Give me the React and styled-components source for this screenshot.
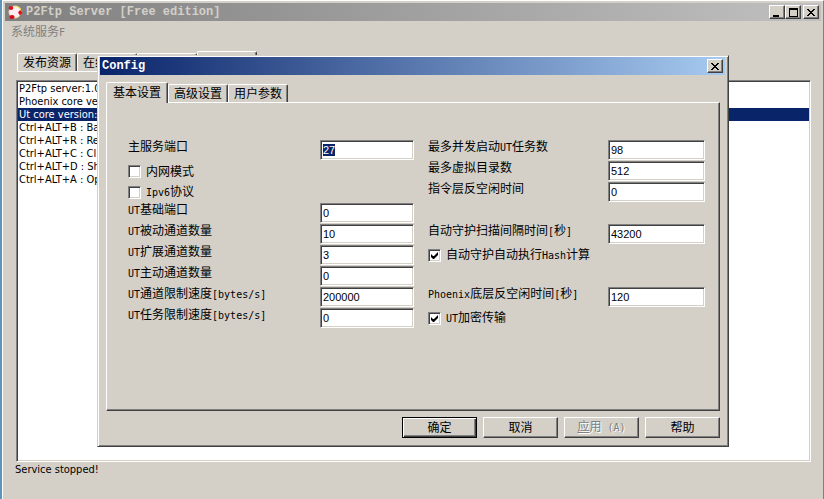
import React, { useEffect, useRef } from "react";
import styled, { createGlobalStyle, css } from "styled-components";

const logLines = [
  "P2Ftp server:1.0",
  "Phoenix core ve",
  "Ut core version:",
  "Ctrl+ALT+B : Ba",
  "Ctrl+ALT+R : Re",
  "Ctrl+ALT+C : Cl",
  "Ctrl+ALT+D : Sh",
  "Ctrl+ALT+A : Op",
];

const leftFields = [
  { id: "port", label: "主服务端口", value: "27", focus: true },
  { id: "lan", label: "内网模式", type: "check" },
  { id: "ipv6", label: "Ipv6协议", type: "check" },
  { id: "utport", label: "UT基础端口", value: "0" },
  { id: "passive", label: "UT被动通道数量", value: "10" },
  { id: "extend", label: "UT扩展通道数量", value: "3" },
  { id: "active", label: "UT主动通道数量", value: "0" },
  { id: "chspeed", label: "UT通道限制速度[bytes/s]", value: "200000" },
  { id: "taskspeed", label: "UT任务限制速度[bytes/s]", value: "0" },
];

const rightFields = [
  { id: "maxtask", label: "最多并发启动UT任务数", value: "98" },
  { id: "maxdir", label: "最多虚拟目录数", value: "512" },
  { id: "idle", label: "指令层反空闲时间", value: "0" },
  { id: "gap1", type: "gap" },
  { id: "scan", label: "自动守护扫描间隔时间[秒]", value: "43200" },
  { id: "hash", label: "自动守护自动执行Hash计算", type: "check", checked: true },
  { id: "gap2", type: "gap" },
  { id: "phoenix", label: "Phoenix底层反空闲时间[秒]", value: "120" },
  { id: "encrypt", label: "UT加密传输", type: "check", checked: true },
];

// latin runs use a half-width face next to the full-width characters
const Mixed = ({ text }) =>
  text
    .split(/([\x20-\x7e]+)/)
    .filter(Boolean)
    .map((part, i) =>
      /^[\x20-\x7e]/.test(part) ? <Latin key={i}>{part}</Latin> : part
    );

const Logo = () => (
  <svg width="15" height="15" viewBox="0 0 15 15" aria-hidden="true">
    <circle cx="7" cy="7" r="6" fill="#fdeef4" stroke="#e8dc9a" strokeWidth="1" />
    <ellipse cx="3" cy="3" rx="2.3" ry="2" fill="#e01018" />
    <ellipse cx="4" cy="12" rx="2.6" ry="1.9" fill="#d80c14" />
    <path d="M10 7.5 L12 5 L14.5 7.5 L12 10.5 Z" fill="#e01018" />
    <path d="M8 1 L12 3 L12.5 5" fill="none" stroke="#f6e64c" strokeWidth="1" />
  </svg>
);

const CloseIcon = () => (
  <svg width="8" height="7" viewBox="0 0 8 7" shapeRendering="crispEdges" aria-hidden="true">
    <path
      d="M0 0h2v1H0zM6 0h2v1H6zM1 1h2v1H1zM5 1h2v1H5zM2 2h4v1H2zM3 3h2v1H3zM2 4h4v1H2zM1 5h2v1H1zM5 5h2v1H5zM0 6h2v1H0zM6 6h2v1H6z"
      fill="#000"
    />
  </svg>
);

const MinIcon = () => (
  <svg width="10" height="9" viewBox="0 0 10 9" shapeRendering="crispEdges" aria-hidden="true">
    <path d="M1 7h6v2H1z" fill="#000" />
  </svg>
);

const MaxIcon = () => (
  <svg width="9" height="9" viewBox="0 0 9 9" shapeRendering="crispEdges" aria-hidden="true">
    <path d="M0 0h9v9H0zM1 2v6h7V2z" fillRule="evenodd" fill="#000" />
  </svg>
);

const Field = ({ field }) => {
  const ref = useRef(null);

  useEffect(() => {
    if (field.focus) {
      ref.current.focus();
      ref.current.select();
    }
  }, [field.focus]);

  if (field.type === "gap") return <Row />;

  if (field.type === "check") {
    return (
      <CheckRow>
        <CheckBox type="checkbox" id={field.id} defaultChecked={field.checked} />
        <label htmlFor={field.id}>
          <Mixed text={field.label} />
        </label>
      </CheckRow>
    );
  }

  return (
    <Row>
      <FieldLabel htmlFor={field.id}>
        <Mixed text={field.label} />
      </FieldLabel>
      <TextBox ref={ref} id={field.id} type="text" defaultValue={field.value} />
    </Row>
  );
};

const App = () => {
  return (
    <>
      <GlobalStyle />
      <Desktop>
        <MainWindow>
          <TitleBar>
            <Logo />
            <Title>P2Ftp Server [Free edition]</Title>
            <ControlButton aria-label="最小化"><MinIcon /></ControlButton>
            <ControlButton aria-label="最大化"><MaxIcon /></ControlButton>
            <ControlButton $apart aria-label="关闭"><CloseIcon /></ControlButton>
          </TitleBar>
          <MenuBar>
            <MenuButton disabled><Mixed text="系统服务F" /></MenuButton>
          </MenuBar>
          <MainTabs>
            <Tab>发布资源</Tab>
            <Tab>在线</Tab>
            <Tab />
            <Tab $active />
          </MainTabs>
          <MainPage>
            <LogList>
              {logLines.map((line, i) => (
                <LogLine key={line} $selected={i === 2}>{line}</LogLine>
              ))}
            </LogList>
          </MainPage>
          <StatusBar>Service stopped!</StatusBar>
        </MainWindow>

        <Dialog role="dialog" aria-label="Config">
          <TitleBar $active>
            <Title>Config</Title>
            <ControlButton aria-label="关闭"><CloseIcon /></ControlButton>
          </TitleBar>
          <DialogBody>
            <DialogTabs>
              <Tab $active>基本设置</Tab>
              <Tab>高级设置</Tab>
              <Tab>用户参数</Tab>
            </DialogTabs>
            <TabPage>
              <Column>
                {leftFields.map((f) => <Field key={f.id} field={f} />)}
              </Column>
              <Column $wide>
                {rightFields.map((f) => <Field key={f.id} field={f} />)}
              </Column>
            </TabPage>
            <Footer>
              <PushButton $primary>确定</PushButton>
              <PushButton>取消</PushButton>
              <PushButton disabled><u>应</u>用<Latin> (A)</Latin></PushButton>
              <PushButton>帮助</PushButton>
            </Footer>
          </DialogBody>
        </Dialog>
      </Desktop>
    </>
  );
};

export default App;

const GlobalStyle = createGlobalStyle`
  * {
    box-sizing: border-box;
  }

  body {
    margin: 0;
    font-family: "Liberation Sans", "Noto Sans CJK SC", sans-serif;
    font-size: 12px;
    line-height: 14px;
    color: #000;
    background: #5f94ba;
  }

  button, input {
    font: inherit;
    color: inherit;
    margin: 0;
    padding: 0;
    border-radius: 0;
  }
`

const raised = css`
  border: 1px solid;
  border-color: #fff #404040 #404040 #fff;
  box-shadow: inset -1px -1px #808080;
`

const sunken = css`
  border: 1px solid;
  border-color: #808080 #fff #fff #808080;
  box-shadow: inset 1px 1px #404040, inset -1px -1px #d4d0c8;
`

const Latin = styled.span`
  font-family: "DejaVu Sans Mono", monospace;
  font-size: 10px;
  white-space: pre;
`

const Desktop = styled.div`
  position: relative;
  min-height: 100vh;
  display: flex;
  padding-left: 2px;
`

const MainWindow = styled.main`
  flex: 1;
  display: flex;
  flex-direction: column;
  padding: 2px 2px 0 2px;
  background: #d4d0c8;
  border: 1px solid #fff;
  border-right-color: #808080;
  border-bottom: 0;
`

const TitleBar = styled.header`
  height: 18px;
  display: flex;
  align-items: center;
  padding: 0 2px;
  color: ${(p) => (p.$active ? "#fff" : "#d4d0c8")};
  background: ${(p) =>
    p.$active
      ? "linear-gradient(to right, #0a246a, #a6caf0)"
      : "linear-gradient(to right, #808080, #c0c0c0)"};

  > svg {
    margin: 0 3px 0 1px;
  }
`

const Title = styled.h1`
  flex: 1;
  margin: 0;
  font-family: "Liberation Mono", monospace;
  font-size: 12px;
  font-weight: bold;
  line-height: 18px;
`

const ControlButton = styled.button`
  width: 16px;
  height: 14px;
  display: flex;
  align-items: center;
  justify-content: center;
  background: #d4d0c8;
  margin-left: ${(p) => (p.$apart ? "2px" : "0")};
  ${raised}
`

const MenuBar = styled.nav`
  height: 31px;
  padding: 3px 6px;
`

const MenuButton = styled.button`
  border: 0;
  background: none;
  line-height: 16px;

  &:disabled {
    color: #808080;
  }
`

const MainTabs = styled.div`
  height: 20px;
  display: flex;
  align-self: flex-start;
  align-items: flex-end;
  margin-left: 12px;
  border-bottom: 1px solid #fff;
`

const Tab = styled.button`
  min-width: 60px;
  height: ${(p) => (p.$active ? "21px" : "18px")};
  padding: 0 5px;
  text-align: left;
  white-space: nowrap;
  background: #d4d0c8;
  border: 1px solid;
  border-color: #fff #404040 transparent #fff;
  border-bottom: 0;
  border-radius: 2px 2px 0 0;
  box-shadow: inset -1px 0 #808080;

  ${(p) => p.$active && css`
    position: relative;
    padding: 0 6px 1px;
    margin-bottom: -1px;
  `}
`

const MainPage = styled.section`
  flex: 1;
  display: flex;
  margin: 0 10px 0 11px;
  padding-top: 8px;
`

const LogList = styled.ul`
  flex: 1;
  margin: 0;
  padding: 1px;
  list-style: none;
  background: #fff;
  overflow: hidden;
  ${sunken}
`

const LogLine = styled.li`
  padding-left: 1px;
  font-family: "DejaVu Sans Condensed", "DejaVu Sans", sans-serif;
  font-size: 11px;
  line-height: 13px;
  white-space: nowrap;
  color: ${(p) => (p.$selected ? "#fff" : "#000")};
  background: ${(p) => (p.$selected ? "#0a246a" : "none")};
`

const StatusBar = styled.footer`
  height: 37px;
  padding: 1px 0 0 10px;
  font-family: "DejaVu Sans Condensed", "DejaVu Sans", sans-serif;
  font-size: 11px;
`

const Dialog = styled.section`
  position: absolute;
  top: 55px;
  left: 97px;
  right: 95px;
  padding: 1px 3px 2px 2px;
  background: #d4d0c8;
  border: 1px solid;
  border-color: #d4d0c8 #404040 #404040 #d4d0c8;
  box-shadow: inset 1px 1px #fff, inset -1px -1px #808080;
`

const DialogBody = styled.div`
  padding: 7px 5px 6px 6px;
`

const DialogTabs = styled.div`
  height: 20px;
  display: flex;
  align-items: flex-end;
`

const TabPage = styled.div`
  display: flex;
  gap: 14px;
  padding: 37px 14px 81px 21px;
  ${raised}
`

const Column = styled.div`
  flex: ${(p) => (p.$wide ? "277 1 0" : "286 1 0")};

  input[type="text"] {
    width: ${(p) => (p.$wide ? "97px" : "94px")};
  }
`

const Row = styled.div`
  height: 21px;
  display: flex;
  align-items: flex-start;
  justify-content: space-between;
`

const CheckRow = styled(Row)`
  align-items: center;
  justify-content: flex-start;
  gap: 5px;
`

const FieldLabel = styled.label`
  white-space: nowrap;
`

const TextBox = styled.input`
  height: 20px;
  padding: 0 2px;
  font-size: 11px;
  background: #fff;
  outline: none;
  ${sunken}

  &::selection {
    color: #fff;
    background: #0a246a;
  }
`

const CheckBox = styled.input`
  appearance: none;
  width: 13px;
  height: 13px;
  display: grid;
  place-content: center;
  background: #fff;
  ${sunken}

  &:checked::before {
    content: "";
    width: 7px;
    height: 7px;
    background: #000;
    clip-path: polygon(0 2px, 2px 4px, 3px 4px, 7px 0, 7px 3px, 3px 7px, 2px 7px, 0 5px);
  }
`

const Footer = styled.div`
  display: flex;
  justify-content: flex-end;
  gap: 6px;
  padding-top: 6px;
`

const PushButton = styled.button`
  width: 75px;
  height: 21px;
  background: #d4d0c8;
  ${raised}

  ${(p) => p.$primary && css`
    border-color: #000;
    box-shadow: inset 1px 1px #fff, inset -1px -1px #404040, inset -2px -2px #808080;
  `}

  &:disabled {
    color: #808080;
    text-shadow: 1px 1px #fff;
  }
`
